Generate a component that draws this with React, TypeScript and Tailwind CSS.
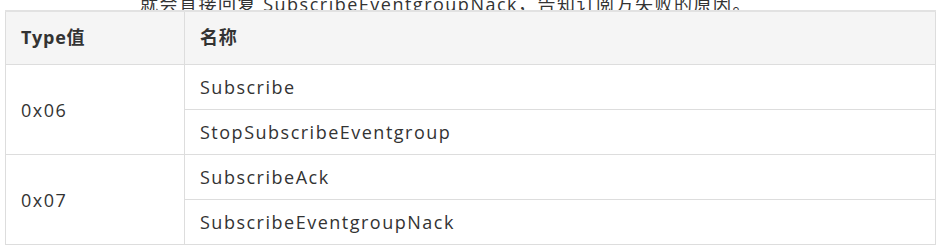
import React from 'react';

interface Group {
    type: string;
    names: string[];
}

const groups: Group[] = [
    { type: '0x06', names: ['Subscribe', 'StopSubscribeEventgroup'] },
    { type: '0x07', names: ['SubscribeAck', 'SubscribeEventgroupNack'] },
];

const App: React.FC = () => {
    return (
        <div className="w-[940px] h-[249px] bg-white overflow-hidden text-[#333] font-['Open_Sans','Noto_Sans_CJK_SC',sans-serif]">
            {/* cut-off paragraph above the table */}
            <div className="h-[10px] overflow-hidden flex items-end pl-[140px]">
                <p className="text-[18px] leading-[24px] tracking-[1.5px] whitespace-nowrap -mb-[6px]">
                    就会直接回复 SubscribeEventgroupNack，告知订阅方失败的原因。
                </p>
            </div>
            <div className="pl-[5px]">
                <table className="w-[931px] border-collapse border-t-2 border-t-[#e2e2e2] text-[18px] tracking-[1.5px]">
                    <thead>
                        <tr className="bg-[#f5f5f5] h-[53px]">
                            <th className="w-[179px] border border-[#dddddd] border-t-0 px-[15px] text-left font-bold tracking-[0.7px]">Type值</th>
                            <th className="border border-[#dddddd] border-t-0 px-[15px] text-left font-bold tracking-[0.7px]">名称</th>
                        </tr>
                    </thead>
                    <tbody>
                        {groups.map(group =>
                            group.names.map((name, i) => (
                                <tr key={name} className="h-[45px]">
                                    {i === 0 && (
                                        <td rowSpan={group.names.length} className="border border-[#dddddd] px-[15px] pt-[3px]">{group.type}</td>
                                    )}
                                    <td className="border border-[#dddddd] px-[15px] pt-[2px]">{name}</td>
                                </tr>
                            ))
                        )}
                    </tbody>
                </table>
            </div>
        </div>
    );
};

export default App;
